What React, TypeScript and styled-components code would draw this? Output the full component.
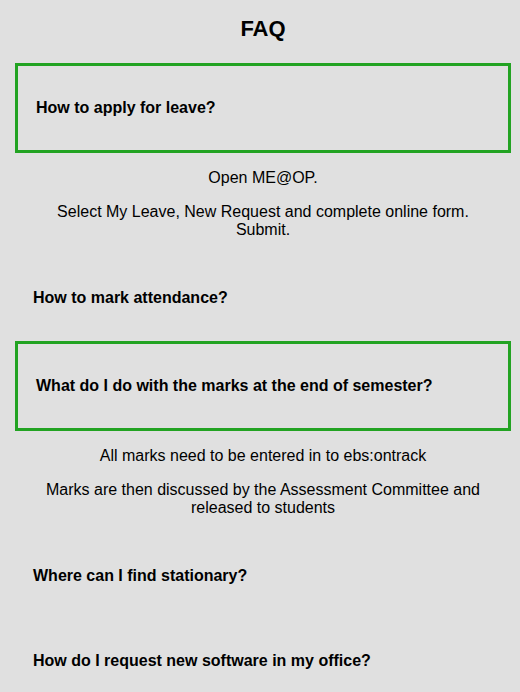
import React from "react";
import styled, { createGlobalStyle } from "styled-components";

const GlobalStyle = createGlobalStyle`
  html, body {
    margin: 0;
    padding: 0;
    background: #e0e0e0;
  }
  body {
    font-family: "Liberation Sans", Arial, sans-serif;
    color: #000;
  }
`;

const Page = styled.div`
  display: flex;
  flex-direction: column;
  padding: 0 9px 0 15px;
  background: #e0e0e0;
  min-height: 692px;
  box-sizing: border-box;
`;

const Title = styled.h1`
  margin: 16px 0 21px;
  font-size: 22px;
  font-weight: bold;
  text-align: center;
  line-height: normal;
`;

const List = styled.div`
  display: flex;
  flex-direction: column;
`;

const Item = styled.div<{ $open: boolean }>`
  border: ${(p) => (p.$open ? "3px solid #22a322" : "none")};
  padding: ${(p) => (p.$open ? "33px 18px" : "33px 18px 34px")};
`;

const Question = styled.h3`
  margin: 0;
  font-size: 16px;
  font-weight: bold;
  line-height: normal;
`;

const Answer = styled.div`
  display: flex;
  flex-direction: column;
  gap: 16px;
  padding: 16px 18px 17px;
  text-align: center;
`;

const AnswerText = styled.p`
  margin: 0;
  font-size: 16px;
  line-height: normal;
`;

type Faq = { q: string; a?: string[] };

const faqs: Faq[] = [
  {
    q: "How to apply for leave?",
    a: ["Open ME@OP.", "Select My Leave, New Request and complete online form. Submit."],
  },
  { q: "How to mark attendance?" },
  {
    q: "What do I do with the marks at the end of semester?",
    a: [
      "All marks need to be entered in to ebs:ontrack",
      "Marks are then discussed by the Assessment Committee and released to students",
    ],
  },
  { q: "Where can I find stationary?" },
  { q: "How do I request new software in my office?" },
];

export default function App() {
  return (
    <>
      <GlobalStyle />
      <Page>
        <Title>FAQ</Title>
        <List>
          {faqs.map((f) => (
            <React.Fragment key={f.q}>
              <Item $open={!!f.a}>
                <Question>{f.q}</Question>
              </Item>
              {f.a && (
                <Answer>
                  {f.a.map((t) => (
                    <AnswerText key={t}>{t}</AnswerText>
                  ))}
                </Answer>
              )}
            </React.Fragment>
          ))}
        </List>
      </Page>
    </>
  );
}
